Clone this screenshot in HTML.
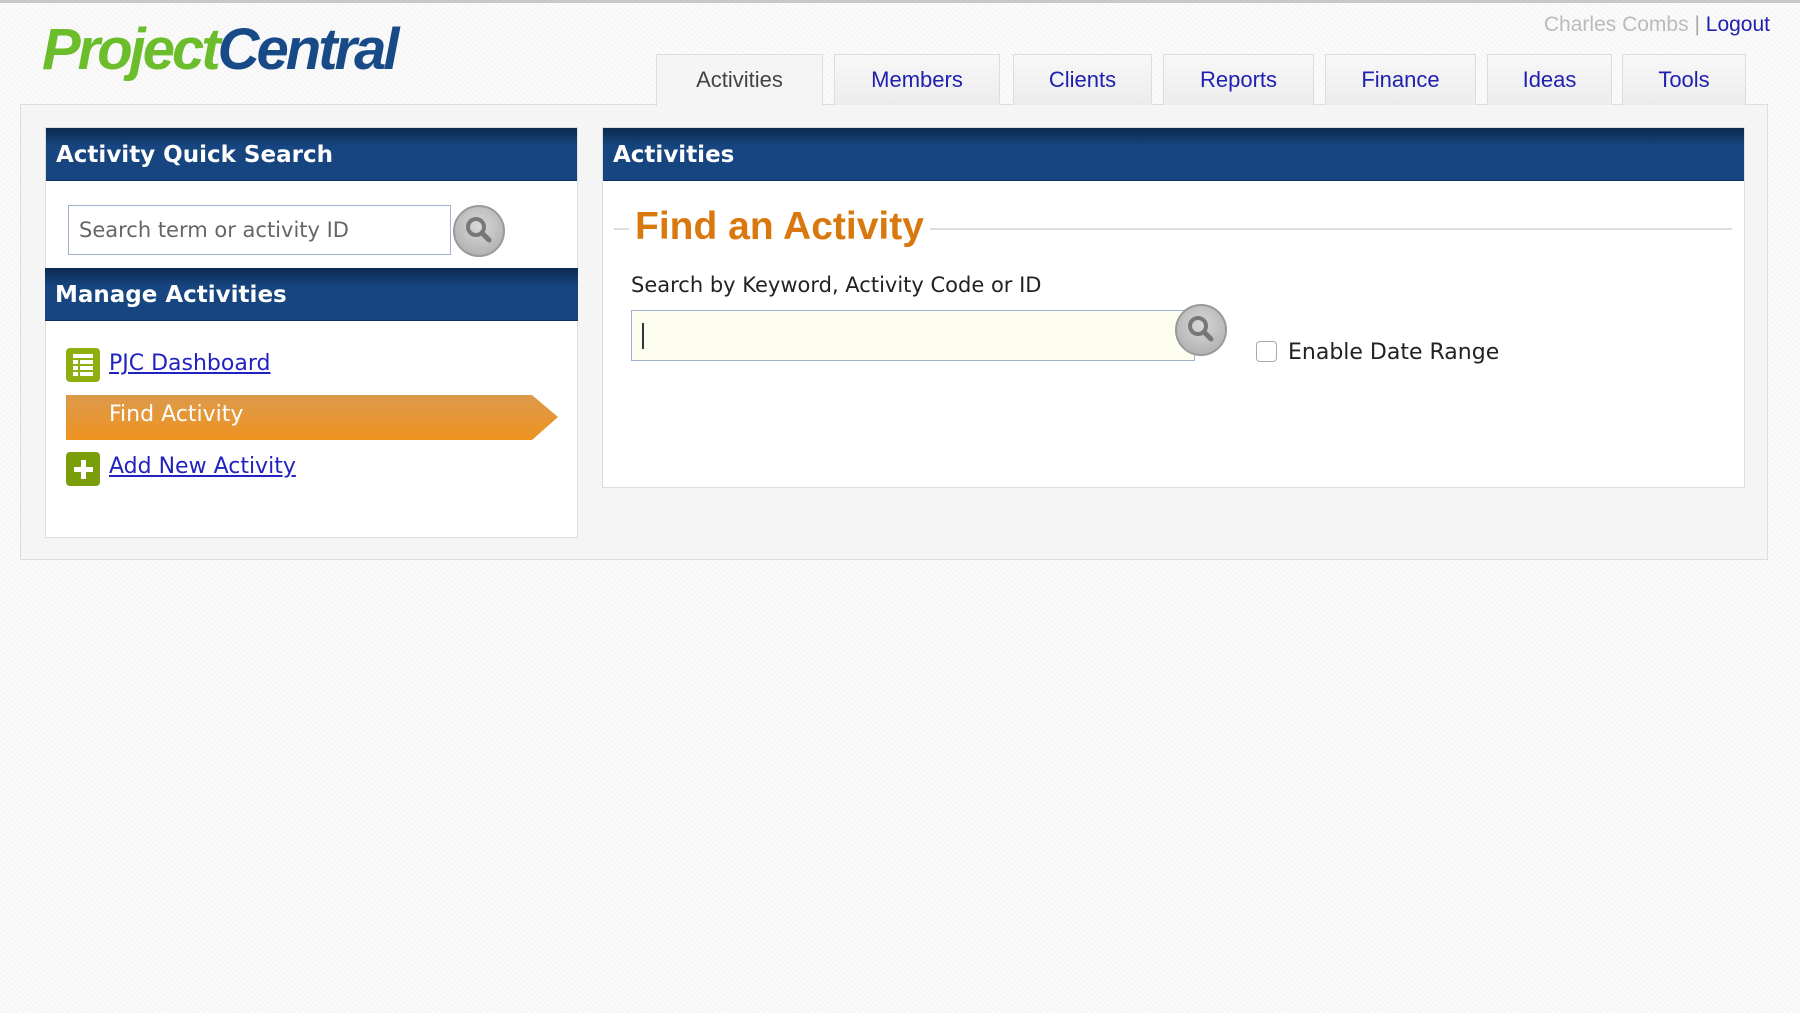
<!DOCTYPE html>
<html><head><meta charset="utf-8"><style>
*{box-sizing:border-box;margin:0;padding:0}
body{width:1800px;height:1013px;overflow:hidden;font-family:"DejaVu Sans","Liberation Sans",sans-serif;background:repeating-linear-gradient(45deg,#f6f6f6 0,#f6f6f6 2px,#fbfbfb 2px,#fbfbfb 4px);position:relative;border-top:3px solid #c8c8c8}
.abs{position:absolute}
.logo{left:42px;top:13px;font-family:"Liberation Sans",sans-serif;font-weight:bold;font-style:italic;font-size:58px;letter-spacing:-3px}
.user{right:30px;top:10px;font-size:21px;color:#bbb;font-family:"Liberation Sans",sans-serif}
.user a{color:#2020b0;text-decoration:none}
.tab{top:51px;height:51px;background:linear-gradient(#f8f8f8,#ececec);border:1px solid #ddd;border-bottom:none;color:#2020b0;font-size:22px;text-align:center;line-height:50px;font-family:"Liberation Sans",sans-serif}
.tab.on{background:#f5f5f5;color:#444}
.outer{left:20px;top:101px;width:1748px;height:456px;background:#f5f5f5;border:1px solid #ddd}
.box{background:#fff;border:1px solid #ddd}
.hd{height:53px;background:linear-gradient(#0c2a50,#174580 35%,#174580);color:#fff;font-weight:bold;font-size:23px;line-height:54px;padding-left:10px;border-bottom:1px solid #0e3060}
.btn{width:52px;height:52px;border-radius:50%;background:radial-gradient(circle at 50% 40%,#d8d8d8,#a8a8a8);border:2px solid #9a9a9a}
a.l{color:#2222c0;text-decoration:underline;font-size:22px}
</style></head><body>
<div class="abs logo"><span style="color:#6cbd2c">Project</span><span style="color:#174a86">Central</span></div>
<div class="abs user">Charles Combs <span style="color:#aaa">|</span> <a>Logout</a></div>
<div class="abs outer"></div>
<div class="abs tab on" style="left:656px;width:167px;height:52px">Activities</div>
<div class="abs tab" style="left:834px;width:166px">Members</div>
<div class="abs tab" style="left:1013px;width:139px">Clients</div>
<div class="abs tab" style="left:1163px;width:151px">Reports</div>
<div class="abs tab" style="left:1325px;width:151px">Finance</div>
<div class="abs tab" style="left:1487px;width:125px">Ideas</div>
<div class="abs tab" style="left:1622px;width:124px">Tools</div>

<div class="abs box" style="left:45px;top:124px;width:533px;height:411px">
<div class="hd">Activity Quick Search</div>
<div class="hd" style="position:absolute;left:-1px;top:140px;width:533px">Manage Activities</div>
</div>
<div class="abs" style="left:68px;top:202px;width:383px;height:50px;border:1px solid #9fb1cc;background:#fff;font-size:21px;color:#666;line-height:48px;padding-left:10px">Search term or activity ID</div>
<div class="abs btn" style="left:453px;top:202px"><svg width="48" height="48" viewBox="0 0 48 48"><circle cx="21" cy="20" r="8" fill="none" stroke="#777" stroke-width="4"/><line x1="27" y1="26" x2="34" y2="33" stroke="#777" stroke-width="5" stroke-linecap="round"/></svg></div>

<div class="abs" style="left:66px;top:345px;width:34px;height:34px;border-radius:4px;background:#8fae0f"><svg width="34" height="34"><g fill="#fff"><rect x="7" y="6" width="20" height="4"/><rect x="7" y="12" width="5" height="4"/><rect x="14" y="12" width="13" height="4"/><rect x="7" y="18" width="5" height="4"/><rect x="14" y="18" width="13" height="4"/><rect x="7" y="24" width="5" height="4"/><rect x="14" y="24" width="13" height="4"/></g></svg></div>
<a class="abs l" style="left:109px;top:348px">PJC Dashboard</a>
<div class="abs" style="left:66px;top:392px;width:492px;height:45px"><svg width="492" height="45"><defs><linearGradient id="g" x1="0" y1="0" x2="0" y2="1"><stop offset="0" stop-color="#dc9a4c"/><stop offset="1" stop-color="#ee9320"/></linearGradient></defs><polygon points="0,0 466,0 492,22 466,45 0,45" fill="url(#g)"/></svg><span style="position:absolute;left:43px;top:7px;color:#fff;font-size:22px">Find Activity</span></div>
<div class="abs" style="left:66px;top:449px;width:34px;height:34px;border-radius:4px;background:#7a9e0a"><svg width="34" height="34"><rect x="15" y="8" width="5" height="19" fill="#fff"/><rect x="8" y="15" width="19" height="5" fill="#fff"/></svg></div>
<a class="abs l" style="left:109px;top:451px">Add New Activity</a>

<div class="abs box" style="left:602px;top:124px;width:1143px;height:361px">
<div class="hd">Activities</div>
</div>
<div class="abs" style="left:614px;top:225px;width:1118px;height:2px;background:#ddd"></div>
<div class="abs" style="left:629px;top:200px;padding:0 6px;background:#fff;color:#d9780f;font-weight:bold;font-size:39px;line-height:48px;font-family:'Liberation Sans',sans-serif">Find an Activity</div>
<div class="abs" style="left:631px;top:270px;font-size:21px;color:#222">Search by Keyword, Activity Code or ID</div>
<div class="abs" style="left:631px;top:307px;width:564px;height:51px;border:1px solid #9fb1cc;background:#fefef0"><div style="position:absolute;left:10px;top:12px;width:2px;height:26px;background:#333"></div></div>
<div class="abs btn" style="left:1175px;top:301px"><svg width="48" height="48" viewBox="0 0 48 48"><circle cx="21" cy="20" r="8" fill="none" stroke="#777" stroke-width="4"/><line x1="27" y1="26" x2="34" y2="33" stroke="#777" stroke-width="5" stroke-linecap="round"/></svg></div>
<div class="abs" style="left:1256px;top:338px;width:21px;height:21px;border:1px solid #aaa;border-radius:4px;background:#fff"></div>
<div class="abs" style="left:1288px;top:337px;font-size:22px;color:#222">Enable Date Range</div>
</body></html>
